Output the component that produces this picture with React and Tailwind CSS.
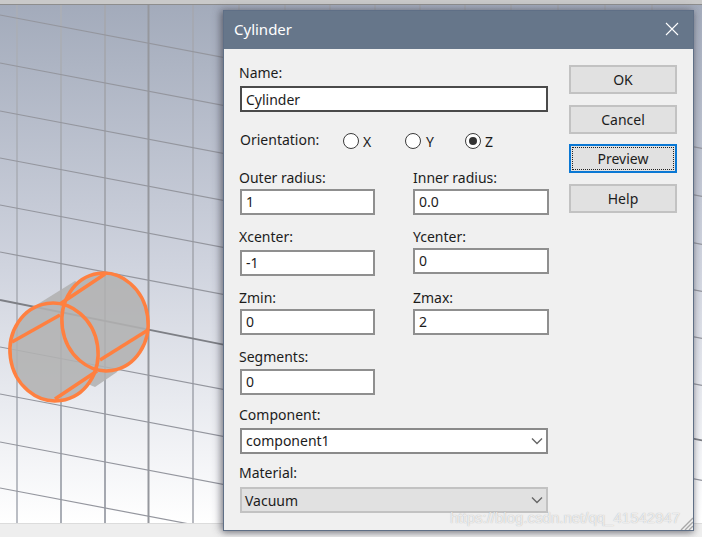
import React from "react";

function Label({ className = "", children }) {
  return <div className={"h-5 leading-5 text-[14px] text-[#1c1c1c] " + className}>{children}</div>;
}

function Input({ value, className = "bg-white border-[#8f8f8f] pl-1 pb-[2px]" }) {
  return (
    <div className={"h-[26px] border-2 flex items-center text-[14px] text-[#1c1c1c] " + className}>
      {value}
    </div>
  );
}

function Chevron() {
  return (
    <svg width="12" height="8" viewBox="0 0 12 8" className="absolute right-[5px] top-[9px]">
      <path d="M1 1.5 L6 6.5 L11 1.5" fill="none" stroke="#666" strokeWidth="1.4" />
    </svg>
  );
}

function Radio({ checked }) {
  return (
    <span className="w-4 h-4 rounded-full border border-[#3a3a3a] bg-white flex items-center justify-center shrink-0">
      {checked && <span className="w-2 h-2 rounded-full bg-[#333]" />}
    </span>
  );
}

function Button({ children, focused }) {
  if (focused)
    return (
      <div className="h-[29px] border-2 border-[#0a78d4] bg-[#e1e1e1] p-px">
        <div className="h-full border border-dotted border-[#222] flex items-center justify-center text-[14px] text-[#1c1c1c]">
          {children}
        </div>
      </div>
    );
  return (
    <div className="h-[29px] border-2 border-[#c2c2c2] bg-[#e1e1e1] flex items-center justify-center text-[14px] text-[#1c1c1c]">
      {children}
    </div>
  );
}

function Scene() {
  const verts = [
    [17, "#aaaeb6", 1.6],
    [61, "#aaaeb6", 2],
    [105, "#a5a8b0", 2],
    [148.5, "#95979d", 2],
    [193, "#a5a8b0", 1.6],
    [239, "#a3a6ae", 1.6],
    [285, "#a3a6ae", 1.6],
    [330, "#a3a6ae", 1.6],
    [375, "#a3a6ae", 1.6],
    [420, "#a3a6ae", 1.6],
    [465, "#a3a6ae", 1.6],
    [511, "#a3a6ae", 1.6],
    [558, "#a3a6ae", 1.6],
    [605, "#a3a6ae", 1.6],
    [652, "#a3a6ae", 1.6],
  ];
  const leftY = [15, 63, 111, 158, 205, 252, 347, 394, 442, 488];
  return (
    <svg width="702" height="518" viewBox="0 5 702 518" className="block">
      <defs>
        <linearGradient id="bg" x1="0" y1="0" x2="0" y2="1">
          <stop offset="0" stopColor="#a3abbb" />
          <stop offset="0.5" stopColor="#cfd3de" />
          <stop offset="1" stopColor="#ffffff" />
        </linearGradient>
      </defs>
      <rect x="0" y="5" width="702" height="518" fill="url(#bg)" />
      {verts.map(([x, c, w]) => (
        <line key={x} x1={x} y1="5" x2={x} y2="523" stroke={c} strokeWidth={w} />
      ))}
      {leftY.map((y) => (
        <line key={y} x1="0" y1={y} x2="702" y2={y + 702 * 0.19} stroke="#94969e" strokeWidth="1.2" />
      ))}
      <line x1="0" y1="300" x2="702" y2={300 + 702 * 0.2} stroke="#7d7f85" strokeWidth="1.8" />
      <g fill="#b2b2b2" opacity="0.88">
        <path d="M38 304 L75 281 L148 322 L117 372 L95 387 L10 352 Z" />
        <ellipse cx="105" cy="322" rx="43" ry="49" transform="rotate(-8 105 322)" />
        <ellipse cx="54" cy="352" rx="44" ry="49" transform="rotate(-8 54 352)" />
      </g>
      <g fill="none" stroke="#ff8040" strokeWidth="3.5">
        <ellipse cx="105" cy="322" rx="43" ry="49" transform="rotate(-8 105 322)" />
        <ellipse cx="54" cy="352" rx="44" ry="49" transform="rotate(-8 54 352)" />
        <path d="M12 342 L60 315" />
        <path d="M60 304 L105 274" />
        <path d="M100 360 L148 330" />
        <path d="M55 399 L97 371" />
      </g>
    </svg>
  );
}

export default function App() {
  return (
    <div className="relative w-[702px] h-[537px] overflow-hidden bg-[#eeeeee] flex flex-col" style={{ fontFamily: '"Noto Sans", sans-serif' }}>
      <div className="h-[5px] bg-[#c9c9c9] border-b border-[#8d8d8d]" />
      <Scene />
      <div className="flex-1 bg-[#eeeeee] border-t border-[#dcdcdc]" />

      <div className="absolute left-[223px] top-[10px] w-[471px] h-[521px] border border-[#5f6f86] bg-[#f0f0f0] flex flex-col shadow-[-3px_0_8px_rgba(60,60,70,0.45),0_2px_6px_rgba(60,60,70,0.4)]">
        <div className="h-[38px] bg-[#66768a] flex items-center justify-between pl-[10px] pr-[14px] pb-[2px] text-white text-[15px]">
          <span>Cylinder</span>
          <svg width="14" height="14" viewBox="0 0 14 14">
            <path d="M1 1 L13 13 M13 1 L1 13" stroke="#fff" strokeWidth="1.1" />
          </svg>
        </div>
        <div className="flex pl-[16px] gap-[21px] flex-1">
          <div className="w-[308px] pt-[14px]">
            <Label className="mb-[3px] -ml-px">Name:</Label>
            <Input value="Cylinder" className="h-[25px] bg-white border-[#4a4a4a] pl-1" />
            <div className="mt-[19px] flex items-center h-5 text-[14px] text-[#1c1c1c]">
              <span className="w-[103px] pb-1">Orientation:</span>
              <span className="w-[62px] flex items-center gap-1"><Radio /><span>X</span></span>
              <span className="w-[60px] flex items-center gap-[5px]"><Radio /><span>Y</span></span>
              <span className="flex items-center gap-1"><Radio checked /><span>Z</span></span>
            </div>

            <div className="mt-[17px] grid grid-cols-[135px_136px] gap-x-[38px]">
              <div><Label className="mb-px -ml-px">Outer radius:</Label><Input value="1" /></div>
              <div><Label className="mb-px">Inner radius:</Label><Input value="0.0" /></div>
            </div>
            <div className="mt-3 grid grid-cols-[135px_136px] gap-x-[38px]">
              <div><Label className="mb-[3px] -ml-px">Xcenter:</Label><Input value="-1" /></div>
              <div><Label className="mb-px">Ycenter:</Label><Input value="0" /></div>
            </div>
            <div className="mt-3 grid grid-cols-[135px_136px] gap-x-[38px]">
              <div><Label className="mb-px -ml-px">Zmin:</Label><Input value="0" /></div>
              <div><Label className="mb-px">Zmax:</Label><Input value="2" /></div>
            </div>
            <div className="mt-3 w-[135px]">
              <Label className="mb-[2px] -ml-px">Segments:</Label>
              <Input value="0" />
            </div>
            <Label className="mt-[10px] mb-[3px] -ml-px">Component:</Label>
            <div className="relative">
              <Input value="component1" className="bg-white border-[#8a8a8a] pl-1 pb-[2px]" />
              <Chevron />
            </div>
            <Label className="mt-[9px] mb-1 -ml-px">Material:</Label>
            <div className="relative">
              <Input value="Vacuum" className="bg-[#e1e1e1] border-[#c2c2c2] pl-[3px]" />
              <Chevron />
            </div>
          </div>
          <div className="w-[108px] pt-[16px] flex flex-col">
            <Button>OK</Button>
            <div className="mt-[11px]"><Button>Cancel</Button></div>
            <div className="mt-[10px]"><Button focused>Preview</Button></div>
            <div className="mt-[11px]"><Button>Help</Button></div>
          </div>
        </div>
        <svg width="13" height="13" viewBox="0 0 13 13" className="absolute right-0 bottom-0">
          <path d="M13 1 L1 13 M13 5 L5 13 M13 9 L9 13" stroke="#a8a8a8" strokeWidth="1.4" />
        </svg>
      </div>

      <div className="absolute left-[450px] top-[508px] text-[15px] leading-5 text-white/75 [text-shadow:0_0_1px_rgba(120,120,120,0.6)] whitespace-nowrap" style={{ fontFamily: '"Liberation Sans", sans-serif' }}>
        https://blog.csdn.net/qq_41542947
      </div>
    </div>
  );
}
